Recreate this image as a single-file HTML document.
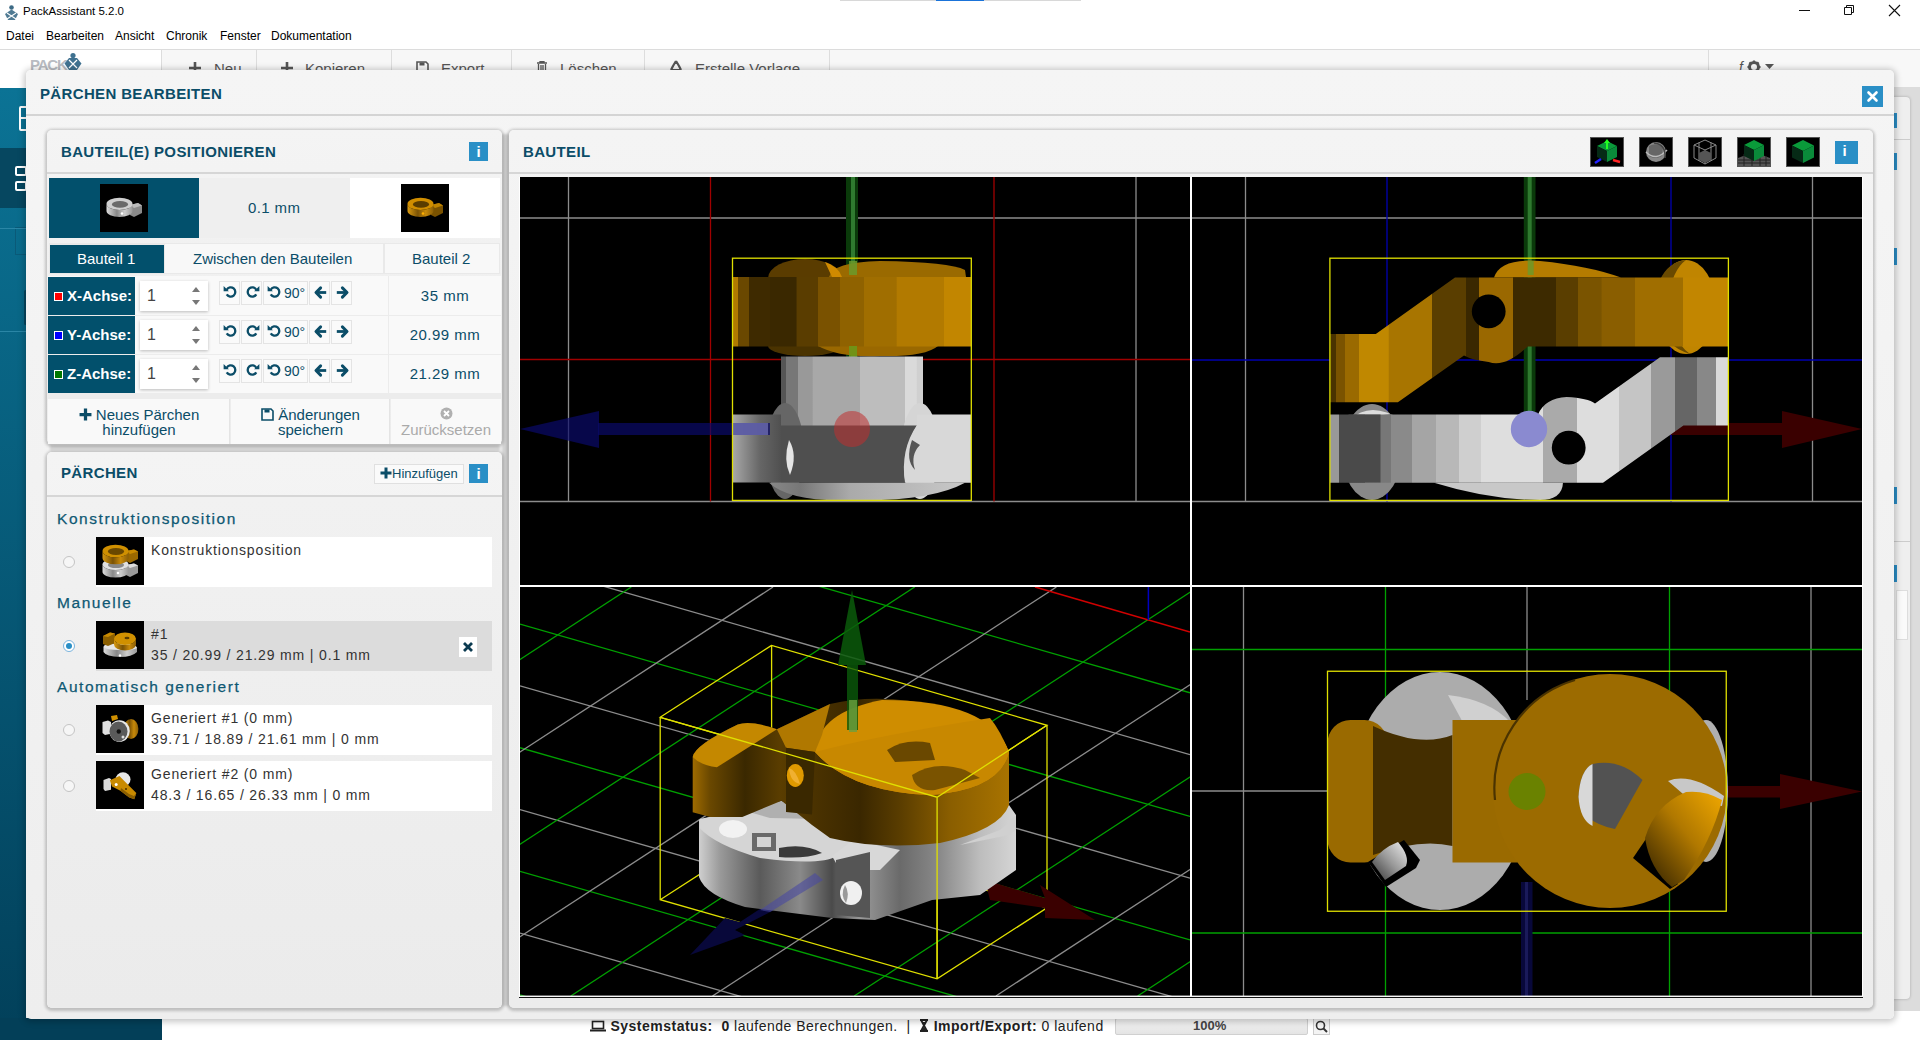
<!DOCTYPE html>
<html><head><meta charset="utf-8">
<style>
*{margin:0;padding:0;box-sizing:border-box}
html,body{width:1920px;height:1040px;overflow:hidden;background:#fff;font-family:"Liberation Sans",sans-serif;position:relative}
.a{position:absolute}
.t{position:absolute;white-space:nowrap;line-height:1}
.teal{color:#0b4d68}
.h{font-weight:bold;letter-spacing:.35px;color:#0b4d68;font-size:15px}
.card{position:absolute;background:linear-gradient(#f4f4f4,#ececec);border-radius:5px;box-shadow:0 1px 3px 2px rgba(0,0,0,.2)}
.sep{position:absolute;height:2px;background:#d6d6d6}
.btn{position:absolute;background:#fafafa;border:1px solid #e2e2e2}

.ib{width:19px;height:19px;background:#2a8fc6}
.ib:after{content:"i";position:absolute;left:0;top:1px;width:19px;text-align:center;color:#fff;font-weight:bold;font-size:15px;line-height:17px}
.axl{left:48px;width:87px;height:38px;background:#02506c;color:#fff;font-weight:bold;font-size:15px;line-height:38px;padding-left:19px;white-space:nowrap}
.axl i{position:absolute;left:6px;top:15px;width:9px;height:9px;border:1px solid #fff}
.spin{left:140px;width:68px;height:30px;background:#fff;box-shadow:0 1px 3px rgba(0,0,0,.25);font-size:16px;color:#444;line-height:30px;padding-left:7px}
.spin b,.spin u{position:absolute;left:52px;width:0;height:0;border-left:4.5px solid transparent;border-right:4.5px solid transparent;font-size:0}
.spin b{top:6px;border-bottom:5px solid #777}.spin u{top:19px;border-top:5px solid #777}
.rb{height:24px;background:#fafafa;border:1px solid #e4e4e4}
.rb svg{position:absolute;left:1px;top:0}
.rb span{position:absolute;left:20px;top:2.5px;font-size:14px;color:#0b4d68}
.val{width:112px;text-align:center;font-size:15px;letter-spacing:.5px}
.ab{text-align:center;font-size:15px;line-height:15px;white-space:nowrap}
.grp{font-size:15.5px;color:#0e5873;letter-spacing:1.55px;-webkit-text-stroke:.25px #0e5873}
.it{font-size:14px;color:#333;letter-spacing:.85px}
.rad{width:12px;height:12px;border-radius:50%;border:1px solid #c4c4c4;background:#f6f6f6}
.rad.on{border-color:#7bb4dd;background:#fff}
.rad.on:after{content:"";position:absolute;left:2px;top:2px;width:6px;height:6px;border-radius:50%;background:#2a8fc6}
.tb{top:137px;width:34px;height:30px;border:1px solid #555;background:#000}
.tb svg{display:block}
</style></head><body>
<svg width="0" height="0" style="position:absolute">
<defs>
 <linearGradient id="gW" x1="0" x2="1"><stop offset="0" stop-color="#ddd"/><stop offset=".4" stop-color="#888"/><stop offset=".7" stop-color="#ccc"/><stop offset="1" stop-color="#999"/></linearGradient>
 <linearGradient id="gO" x1="0" x2="1"><stop offset="0" stop-color="#d99a10"/><stop offset=".4" stop-color="#7a5205"/><stop offset=".7" stop-color="#c88a0a"/><stop offset="1" stop-color="#8a5e06"/></linearGradient>
 <symbol id="ccw" viewBox="0 0 19 22"><path d="M5.72 7.7 A4.6 4.6 0 1 1 5.72 12.3" fill="none" stroke="#0b4d68" stroke-width="2.3"/><path d="M2.6 4 L2.6 9.3 L7.9 9.3 Z" fill="#0b4d68"/></symbol>
 <symbol id="cw" viewBox="0 0 19 22"><path d="M13.28 7.7 A4.6 4.6 0 1 0 13.28 12.3" fill="none" stroke="#0b4d68" stroke-width="2.3"/><path d="M16.4 4 L16.4 9.3 L11.1 9.3 Z" fill="#0b4d68"/></symbol>
 <symbol id="la" viewBox="0 0 19 22"><path d="M15.2 10.5H6" stroke="#0b4d68" stroke-width="2.8"/><path d="M9.6 5.9L5 10.5L9.6 15.1" fill="none" stroke="#0b4d68" stroke-width="3" stroke-linecap="round" stroke-linejoin="round"/></symbol>
 <symbol id="ra" viewBox="0 0 19 22"><path d="M3.8 10.5H13" stroke="#0b4d68" stroke-width="2.8"/><path d="M9.4 5.9L14 10.5L9.4 15.1" fill="none" stroke="#0b4d68" stroke-width="3" stroke-linecap="round" stroke-linejoin="round"/></symbol>
 <symbol id="thumbW" viewBox="0 0 48 48"><rect width="48" height="48" fill="#000"/><path d="M30 21 L38 19 L42 21.5 V29 L34 33 L30 31Z" fill="#8a8a8a"/><path d="M30 21 L38 19 L42 21.5 L34 24Z" fill="#bbb"/><path d="M6.5 19.9 A13 6.1 0 0 0 32.5 19.9 V26.9 A13 6.1 0 0 1 6.5 26.9Z" fill="url(#gW)"/><ellipse cx="19.5" cy="19.9" rx="13" ry="6.1" fill="#cfcfcf"/><ellipse cx="20.0" cy="20.4" rx="8.06" ry="3.35" fill="#6a6a6a"/><circle cx="22" cy="29.5" r="1.3" fill="#fff"/></symbol>
 <symbol id="thumbO" viewBox="0 0 48 48"><rect width="48" height="48" fill="#000"/><path d="M30 21 L38 19 L42 21.5 V29 L34 33 L30 31Z" fill="#7a5200"/><path d="M30 21 L38 19 L42 21.5 L34 24Z" fill="#c08400"/><path d="M6.5 19.9 A13 6.1 0 0 0 32.5 19.9 V26.9 A13 6.1 0 0 1 6.5 26.9Z" fill="url(#gO)"/><ellipse cx="19.5" cy="19.9" rx="13" ry="6.1" fill="#d08e00"/><ellipse cx="20.0" cy="20.4" rx="8.06" ry="3.35" fill="#5a3d00"/><circle cx="22" cy="29.5" r="1.3" fill="#ffb000"/></symbol>
 <symbol id="thumbK" viewBox="0 0 48 48"><rect width="48" height="48" fill="#000"/><path d="M30 28 L38 26.5 L42 28.5 V36 L34 40 L30 38Z" fill="#9a9a9a"/><path d="M30 28 L38 26.5 L42 28.5 L34 31Z" fill="#ddd"/><path d="M6.5 27.5 A13 5.5 0 0 0 32.5 27.5 V35.0 A13 5.5 0 0 1 6.5 35.0Z" fill="url(#gW)"/><ellipse cx="19.5" cy="27.5" rx="13" ry="5.5" fill="#e0e0e0"/><ellipse cx="20.0" cy="28.0" rx="8.06" ry="3.03" fill="#888"/><circle cx="22" cy="36" r="1.3" fill="#fff"/><path d="M30 14 L38 12.5 L42 14.5 V22 L34 26 L30 24Z" fill="#9a6800"/><path d="M30 14 L38 12.5 L42 14.5 L34 17Z" fill="#c88a00"/><path d="M6.5 14 A13 6.3 0 0 0 32.5 14 V21 A13 6.3 0 0 1 6.5 21Z" fill="url(#gO)"/><ellipse cx="19.5" cy="14" rx="13" ry="6.3" fill="#d09000"/><ellipse cx="20.0" cy="14.5" rx="8.06" ry="3.47" fill="#6a4800"/></symbol>
 <symbol id="thumbM" viewBox="0 0 48 48"><rect width="48" height="48" fill="#000"/><path d="M7.5 26 Q8 22 24 22.5 Q40 22 41 27 V31 Q36 36 24 36 Q10 35.5 7.5 31Z" fill="url(#gW)"/><path d="M7.5 26 Q8 22 24 22.5 Q40 22 41 27 Q38 29 24 29 Q10 29 7.5 26Z" fill="#e5e5e5"/><path d="M7 15 L14 11.5 L19 12.5 V22 L12 25 L7 23Z" fill="#8a5e00"/><path d="M7 15 L14 11.5 L19 12.5 L12 16Z" fill="#c88a00"/><path d="M18 17.75 A11 6.25 0 0 0 40 17.75 V23.5 A11 6 0 0 1 18 23.5Z" fill="url(#gO)"/><ellipse cx="29" cy="17.75" rx="11" ry="6.25" fill="#d09000"/><ellipse cx="31" cy="17" rx="2.5" ry="1.3" fill="#5a3d00"/><circle cx="24" cy="34.5" r="1.2" fill="#fff"/></symbol>
 <symbol id="thumbG1" viewBox="0 0 48 48"><rect width="48" height="48" fill="#000"/><ellipse cx="35" cy="24" rx="7.4" ry="10" fill="url(#gO)"/><path d="M15 11 L21 10 L22 14 L16 16Z" fill="#d09000"/><path d="M6.5 17 L12 15.4 L15 17 V28.7 L9 30 L6.5 28Z" fill="#e0e0e0"/><ellipse cx="23.5" cy="26" rx="10.3" ry="10.8" fill="#e8e8e8"/><ellipse cx="22.5" cy="26.5" rx="9" ry="10" fill="#5a5a5a"/><circle cx="22.8" cy="26.5" r="2.2" fill="#111"/><circle cx="27" cy="32" r="1.5" fill="#ddd"/></symbol>
 <symbol id="thumbG2" viewBox="0 0 48 48"><rect width="48" height="48" fill="#000"/><ellipse cx="27" cy="18.5" rx="7.5" ry="7.2" fill="#e8e8e8"/><path d="M7.5 19 L13 17 L15 18 V28.7 L9 30 L7.5 28Z" fill="#dcdcdc"/><path d="M13.9 19.2 L23.4 15 L30.8 22.4 L40.3 32 L38.2 38.3 L32.9 36.2 L24.4 29.8 L16 25.6Z" fill="#c88a00"/><path d="M24.4 29.8 L32.9 36.2 L38.2 38.3 L40.3 32 L38 35 L33 33 L25 27Z" fill="#8a5e00"/><circle cx="20.2" cy="23.5" r="1.5" fill="#fff"/><circle cx="30" cy="28" r="0.9" fill="#3a2800"/></symbol>
</defs></svg>


<!-- title bar -->
<svg class="a" style="left:2px;top:3px" width="18" height="18" viewBox="0 0 18 18">
 <circle cx="9.5" cy="4.5" r="2.3" fill="#3d6a85"/>
 <path d="M3 11 L9.5 6.5 L16 11 L13 17 L6 17 Z" fill="#4f7a93"/>
 <path d="M5 10 L14 16 M14 10 L5 16" stroke="#fff" stroke-width="1.1"/>
</svg>
<div class="t" style="left:23px;top:6px;font-size:11.5px;color:#000">PackAssistant 5.2.0</div>
<div class="a" style="left:840px;top:0;width:241px;height:1px;background:#d8d8d8"></div>
<div class="a" style="left:936px;top:0;width:48px;height:1px;background:#1a73d9"></div>
<!-- window controls -->
<div class="a" style="left:1799px;top:10px;width:11px;height:1px;background:#111"></div>
<svg class="a" style="left:1843px;top:4px" width="12" height="12" viewBox="0 0 12 12"><path d="M1.5 3.5h7v7h-7z M3.5 3.5v-2h7v7h-2" fill="none" stroke="#111" stroke-width="1"/></svg>
<svg class="a" style="left:1888px;top:4px" width="13" height="13" viewBox="0 0 13 13"><path d="M1 1L12 12M12 1L1 12" stroke="#111" stroke-width="1.1"/></svg>

<!-- menu -->
<div class="t" style="left:6px;top:30px;font-size:12px;color:#000">Datei</div>
<div class="t" style="left:46px;top:30px;font-size:12px;color:#000">Bearbeiten</div>
<div class="t" style="left:115px;top:30px;font-size:12px;color:#000">Ansicht</div>
<div class="t" style="left:166px;top:30px;font-size:12px;color:#000">Chronik</div>
<div class="t" style="left:220px;top:30px;font-size:12px;color:#000">Fenster</div>
<div class="t" style="left:271px;top:30px;font-size:12px;color:#000">Dokumentation</div>
<div class="a" style="left:0;top:49px;width:1920px;height:1px;background:#dcdcdc"></div>

<!-- background toolbar -->
<div class="a" style="left:161px;top:50px;width:1547px;height:40px;background:#f7f7f7"></div>
<div class="a" style="left:161px;top:50px;width:1px;height:30px;background:#ddd"></div>
<div class="a" style="left:256px;top:50px;width:1px;height:30px;background:#ddd"></div>
<div class="a" style="left:391px;top:50px;width:1px;height:30px;background:#ddd"></div>
<div class="a" style="left:511px;top:50px;width:1px;height:30px;background:#ddd"></div>
<div class="a" style="left:644px;top:50px;width:1px;height:30px;background:#ddd"></div>
<div class="a" style="left:829px;top:50px;width:1px;height:30px;background:#ddd"></div>
<div class="a" style="left:1708px;top:50px;width:1px;height:30px;background:#ddd"></div>
<div class="t" style="left:30px;top:57px;font-size:15px;font-weight:bold;color:#b9bcc2;letter-spacing:-1.2px">PACK</div>
<svg class="a" style="left:63px;top:52px" width="20" height="19" viewBox="0 0 20 19"><circle cx="10" cy="3.5" r="2.6" fill="#3f7190"/><path d="M1.5 11.5 L6 6 L14 6 L18.5 11.5 L14 18 L6 18Z" fill="#3f7190"/><path d="M6 8L14 16M14 8L6 16" stroke="#fff" stroke-width="1.2"/></svg>
<svg class="a" style="left:188px;top:62px" width="14" height="10" viewBox="0 0 14 10"><path d="M7 0V10M1 6H13" stroke="#555" stroke-width="2.6"/></svg><div class="t" style="left:214px;top:61px;font-size:15px;color:#555">Neu</div>
<svg class="a" style="left:280px;top:62px" width="14" height="10" viewBox="0 0 14 10"><path d="M7 0V10M1 6H13" stroke="#555" stroke-width="2.6"/></svg><div class="t" style="left:305px;top:61px;font-size:15px;color:#555">Kopieren</div>
<svg class="a" style="left:416px;top:61px" width="13" height="10" viewBox="0 0 13 10"><path d="M1 1H10L12 3V10H1Z" fill="none" stroke="#555" stroke-width="1.6"/><rect x="3.5" y="1.5" width="5" height="3" fill="#555"/></svg><div class="t" style="left:441px;top:61px;font-size:15px;color:#555">Export</div>
<svg class="a" style="left:536px;top:61px" width="12" height="10" viewBox="0 0 12 10"><path d="M1 2H11M4 2V0.5H8V2M2.5 3V10H9.5V3M5 4V10M7 4V10" stroke="#555" stroke-width="1.3" fill="none"/></svg><div class="t" style="left:560px;top:61px;font-size:15px;color:#555">Löschen</div>
<svg class="a" style="left:669px;top:60px" width="14" height="12" viewBox="0 0 14 12"><path d="M7 1L4 6M7 1L10 6M2 10H12M4 6L2 10M10 6L12 10" stroke="#555" stroke-width="2.2" fill="none"/></svg><div class="t" style="left:695px;top:61px;font-size:15px;color:#555">Erstelle Vorlage</div>
<div class="a" style="left:1709px;top:50px;width:211px;height:40px;background:#f8f8f8"></div><div class="t" style="left:1739px;top:60px;font-size:14px;color:#555;font-style:italic">f</div><svg class="a" style="left:1747px;top:60px" width="14" height="12" viewBox="0 0 14 12"><circle cx="7" cy="7" r="4.5" fill="none" stroke="#555" stroke-width="3"/><path d="M7 0.5V3M7 11V13.5M0.5 7H3M11 7H13.5M2.4 2.4L4 4M10 10L11.6 11.6M11.6 2.4L10 4M4 10L2.4 11.6" stroke="#555" stroke-width="2.2"/></svg><svg class="a" style="left:1765px;top:64px" width="9" height="6" viewBox="0 0 9 6"><path d="M0 0H9L4.5 5Z" fill="#555"/></svg>

<!-- left teal sidebar -->
<div class="a" style="left:0;top:88px;width:26px;height:952px;background:linear-gradient(#0b7395,#02405a)"></div>
<div class="a" style="left:0;top:148px;width:26px;height:60px;background:#064760"></div><div class="a" style="left:19px;top:106px;width:10px;height:25px;border:2px solid #fff;border-radius:2px"></div><div class="a" style="left:19px;top:117px;width:8px;height:2px;background:#fff"></div><div class="a" style="left:15px;top:166px;width:12px;height:10px;border:2px solid #fff;border-radius:2px"></div><div class="a" style="left:15px;top:181px;width:12px;height:10px;border:2px solid #fff;border-radius:2px"></div><div class="a" style="left:15px;top:227px;width:12px;height:28px;border:1px solid #0a5a78"></div><div class="a" style="left:0;top:228px;width:26px;height:1px;background:#2a86a6"></div><div class="a" style="left:0;top:331px;width:26px;height:1px;background:#2a86a6"></div><div class="a" style="left:24px;top:290px;width:3px;height:35px;background:#064760;border-radius:2px"></div>
<div class="a" style="left:0;top:1018px;width:162px;height:22px;background:#033f58"></div>

<!-- background right panel -->
<div class="a" style="left:1860px;top:87px;width:60px;height:924px;background:#dcdcdc"></div><div class="a" style="left:1880px;top:97px;width:30px;height:902px;background:#efefef;box-shadow:0 0 3px rgba(0,0,0,.25);border-radius:4px"></div><div class="a" style="left:1880px;top:139px;width:30px;height:1px;background:#ccc"></div><div class="a" style="left:1880px;top:541px;width:30px;height:1px;background:#ccc"></div><div class="a" style="left:1896px;top:590px;width:12px;height:50px;background:#fafafa;border:1px solid #ddd"></div>
<div class="a" style="left:1893px;top:113px;width:4px;height:15px;background:#2a8cc4"></div>
<div class="a" style="left:1893px;top:153px;width:4px;height:17px;background:#2a8cc4"></div>
<div class="a" style="left:1893px;top:248px;width:4px;height:17px;background:#2a8cc4"></div>
<div class="a" style="left:1893px;top:487px;width:4px;height:17px;background:#2a8cc4"></div>
<div class="a" style="left:1893px;top:565px;width:4px;height:17px;background:#2a8cc4"></div>

<!-- status bar -->
<div class="t" style="left:590px;top:1019px;font-size:14px;color:#222;letter-spacing:.5px"><svg width="16" height="12" viewBox="0 0 16 12" style="vertical-align:-1px"><rect x="2.5" y="1.5" width="11" height="7" fill="none" stroke="#222" stroke-width="1.6"/><path d="M0 10.5H16" stroke="#222" stroke-width="2"/></svg> <b>Systemstatus:</b>&nbsp; <b>0</b> laufende Berechnungen. &nbsp;|&nbsp; <svg width="10" height="13" viewBox="0 0 10 13" style="vertical-align:-1px"><path d="M1 1H9M1 12H9M2 1L8 12M8 1L2 12" stroke="#222" stroke-width="1.8" fill="none"/><path d="M3 3H7L5 6Z M5 8L2.5 11.5H7.5Z" fill="#222"/></svg> <b>Import/Export:</b> 0 laufend</div>
<div class="a" style="left:1115px;top:1018px;width:193px;height:17px;background:linear-gradient(#f4f4f4,#e4e4e4);border:1px solid #d0d0d0;border-radius:2px"></div>
<div class="t" style="left:1193px;top:1019px;font-size:13px;font-weight:bold;color:#444">100%</div>
<div class="a" style="left:1313px;top:1018px;width:17px;height:17px;border:1px solid #ccc;background:#f4f4f4"></div><svg class="a" style="left:1314px;top:1019px" width="15" height="15" viewBox="0 0 15 15"><circle cx="6.5" cy="6.5" r="4" fill="none" stroke="#333" stroke-width="1.6"/><path d="M9.5 9.5L13 13" stroke="#333" stroke-width="2"/></svg>

<!-- DIALOG -->
<div class="a" id="dlg" style="left:26px;top:70px;width:1868px;height:949px;background:linear-gradient(#f5f5f5,#eeeeee);border-radius:5px;box-shadow:0 1px 6px 2px rgba(0,0,0,.22)">
</div>
<div class="t h" style="left:40px;top:86px;font-size:15px">PÄRCHEN BEARBEITEN</div>
<div class="a" style="left:1862px;top:86px;width:21px;height:21px;background:#2a8fc6"></div>
<svg class="a" style="left:1862px;top:86px" width="21" height="21" viewBox="0 0 21 21"><path d="M6.5 6.5L14.5 14.5M14.5 6.5L6.5 14.5" stroke="#fff" stroke-width="2.6" stroke-linecap="round"/></svg>
<div class="sep" style="left:26px;top:114px;width:1868px;height:2px;background:#d4d4d4"></div>

<div class="a" style="left:502px;top:134px;width:7px;height:872px;background:#d2d2d2;filter:blur(1px)"></div><div class="a" style="left:50px;top:445px;width:450px;height:6px;background:#d8d8d8;filter:blur(1px)"></div>
<!-- LEFT CARD -->
<!-- PÄRCHEN CARD -->
<div class="card" style="left:47px;top:452px;width:455px;height:556px"></div>
<div class="t h" style="left:61px;top:465px">PÄRCHEN</div>

<div class="card" style="left:47px;top:130px;width:455px;height:314px"></div>
<div class="t h" style="left:61px;top:144px">BAUTEIL(E) POSITIONIEREN</div>
<!-- info btn -->
<div class="a ib" style="left:469px;top:142px"></div>
<div class="sep" style="left:47px;top:172px;width:455px"></div>
<!-- part select row -->
<div class="a" style="left:49px;top:178px;width:150px;height:60px;background:#02506c"></div>
<div class="a" style="left:199px;top:178px;width:151px;height:60px;background:#efefef"></div>
<div class="a" style="left:350px;top:178px;width:150px;height:60px;background:#fff"></div>
<svg class="a" style="left:100px;top:184px" width="48" height="48" viewBox="0 0 48 48"><use href="#thumbW"/></svg>
<svg class="a" style="left:401px;top:184px" width="48" height="48" viewBox="0 0 48 48"><use href="#thumbO"/></svg>
<div class="t teal" style="left:248px;top:200px;font-size:15px;letter-spacing:.4px">0.1 mm</div>
<!-- tabs -->
<div class="a" style="left:49px;top:243px;width:451px;height:31px;background:#e9e9e9"></div>
<div class="a" style="left:50px;top:245px;width:114px;height:28px;background:#02506c"></div>
<div class="a" style="left:165px;top:244px;width:218px;height:29px;background:#f8f8f8"></div>
<div class="a" style="left:385px;top:244px;width:114px;height:29px;background:#f8f8f8"></div>
<div class="t" style="left:77px;top:251px;font-size:15px;color:#fff">Bauteil 1</div>
<div class="t teal" style="left:193px;top:251px;font-size:15px">Zwischen den Bauteilen</div>
<div class="t teal" style="left:412px;top:251px;font-size:15px">Bauteil 2</div>
<!-- axis rows -->
<div class="a" style="left:48px;top:276px;width:453px;height:117px;background:#f9f9f9"></div>
<div class="a" style="left:48px;top:315px;width:453px;height:1px;background:#ececec"></div>
<div class="a" style="left:48px;top:354px;width:453px;height:1px;background:#ececec"></div>
<div class="a" style="left:388px;top:276px;width:1px;height:117px;background:#ececec"></div>
<div class="a axl" style="top:277px"><i style="background:#f00"></i>X-Achse:</div>
<div class="a axl" style="top:316px"><i style="background:#00f"></i>Y-Achse:</div>
<div class="a axl" style="top:355px"><i style="background:#070"></i>Z-Achse:</div>
<div class="a spin" style="top:281px">1<b></b><u></u></div>
<div class="a spin" style="top:320px">1<b></b><u></u></div>
<div class="a spin" style="top:359px">1<b></b><u></u></div>
<div class="a rb" style="left:219px;top:281px;width:21px"><svg width="19" height="22" viewBox="0 0 19 22"><use href="#ccw"/></svg></div>
<div class="a rb" style="left:241px;top:281px;width:21px"><svg width="19" height="22" viewBox="0 0 19 22"><use href="#cw"/></svg></div>
<div class="a rb" style="left:263px;top:281px;width:45px"><svg width="19" height="22" viewBox="0 0 19 22"><use href="#ccw"/></svg><span>90°</span></div>
<div class="a rb" style="left:309px;top:281px;width:21px"><svg width="19" height="22" viewBox="0 0 19 22"><use href="#la"/></svg></div>
<div class="a rb" style="left:331px;top:281px;width:21px"><svg width="19" height="22" viewBox="0 0 19 22"><use href="#ra"/></svg></div>
<div class="a rb" style="left:219px;top:320px;width:21px"><svg width="19" height="22" viewBox="0 0 19 22"><use href="#ccw"/></svg></div>
<div class="a rb" style="left:241px;top:320px;width:21px"><svg width="19" height="22" viewBox="0 0 19 22"><use href="#cw"/></svg></div>
<div class="a rb" style="left:263px;top:320px;width:45px"><svg width="19" height="22" viewBox="0 0 19 22"><use href="#ccw"/></svg><span>90°</span></div>
<div class="a rb" style="left:309px;top:320px;width:21px"><svg width="19" height="22" viewBox="0 0 19 22"><use href="#la"/></svg></div>
<div class="a rb" style="left:331px;top:320px;width:21px"><svg width="19" height="22" viewBox="0 0 19 22"><use href="#ra"/></svg></div>
<div class="a rb" style="left:219px;top:359px;width:21px"><svg width="19" height="22" viewBox="0 0 19 22"><use href="#ccw"/></svg></div>
<div class="a rb" style="left:241px;top:359px;width:21px"><svg width="19" height="22" viewBox="0 0 19 22"><use href="#cw"/></svg></div>
<div class="a rb" style="left:263px;top:359px;width:45px"><svg width="19" height="22" viewBox="0 0 19 22"><use href="#ccw"/></svg><span>90°</span></div>
<div class="a rb" style="left:309px;top:359px;width:21px"><svg width="19" height="22" viewBox="0 0 19 22"><use href="#la"/></svg></div>
<div class="a rb" style="left:331px;top:359px;width:21px"><svg width="19" height="22" viewBox="0 0 19 22"><use href="#ra"/></svg></div>

<div class="t teal val" style="left:389px;top:288px">35 mm</div>
<div class="t teal val" style="left:389px;top:327px">20.99 mm</div>
<div class="t teal val" style="left:389px;top:366px">21.29 mm</div>
<!-- action buttons -->
<div class="a" style="left:48px;top:393px;width:453px;height:6px;background:#ececec"></div>
<div class="a" style="left:48px;top:399px;width:182px;height:45px;background:#f9f9f9;border-right:1px solid #e4e4e4"></div>
<div class="a" style="left:231px;top:399px;width:159px;height:45px;background:#f9f9f9;border-right:1px solid #e4e4e4"></div>
<div class="a" style="left:391px;top:399px;width:110px;height:45px;background:#f9f9f9"></div>
<div class="t teal ab" style="left:48px;top:407px;width:182px"><svg width="13" height="13" viewBox="0 0 12 12" style="vertical-align:-1px"><path d="M6 0.5V11.5M0.5 6H11.5" stroke="#0b4d68" stroke-width="3"/></svg> Neues Pärchen<br>hinzufügen</div>
<div class="t teal ab" style="left:231px;top:407px;width:159px"><svg width="13" height="13" viewBox="0 0 13 13" style="vertical-align:-1px"><path d="M1 1h9l2 2v9H1z" fill="none" stroke="#0b4d68" stroke-width="1.6"/><rect x="3.5" y="1.5" width="5" height="3" fill="#0b4d68"/></svg> Änderungen<br>speichern</div>
<div class="t ab" style="left:391px;top:407px;width:110px;color:#aaa"><svg width="13" height="13" viewBox="0 0 13 13"><circle cx="6.5" cy="6.5" r="6" fill="#b0b0b0"/><path d="M4 4L9 9M9 4L4 9" stroke="#fff" stroke-width="1.8"/></svg><br>Zurücksetzen</div>
<!-- PAERCHEN card contents -->
<div class="a" style="left:374px;top:464px;width:90px;height:20px;background:#fafafa;border:1px solid #e0e0e0"></div>
<div class="t teal" style="left:380px;top:467px;font-size:13px;color:#0b4d68"><svg width="12" height="12" viewBox="0 0 12 12" style="vertical-align:-1px"><path d="M6 0.5V11.5M0.5 6H11.5" stroke="#0b4d68" stroke-width="3"/></svg>Hinzufügen</div>
<div class="a ib" style="left:469px;top:464px"></div>
<div class="sep" style="left:47px;top:495px;width:455px"></div>
<div class="a" style="left:48px;top:497px;width:453px;height:510px;background:linear-gradient(#f1f1f1,#ebebeb)"></div>
<div class="t grp" style="left:57px;top:511px">Konstruktionsposition</div>
<div class="t grp" style="left:57px;top:595px">Manuelle</div>
<div class="t grp" style="left:57px;top:679px">Automatisch generiert</div>
<!-- items -->
<div class="a" style="left:96px;top:537px;width:396px;height:50px;background:#fff"></div>
<div class="a" style="left:96px;top:621px;width:396px;height:50px;background:#dcdcdc"></div>
<div class="a" style="left:96px;top:705px;width:396px;height:50px;background:#fff"></div>
<div class="a" style="left:96px;top:761px;width:396px;height:50px;background:#fff"></div>
<svg class="a" style="left:96px;top:537px" width="48" height="48" viewBox="0 0 48 48"><use href="#thumbK"/></svg>
<svg class="a" style="left:96px;top:621px" width="48" height="48" viewBox="0 0 48 48"><use href="#thumbM"/></svg>
<svg class="a" style="left:96px;top:705px" width="48" height="48" viewBox="0 0 48 48"><use href="#thumbG1"/></svg>
<svg class="a" style="left:96px;top:761px" width="48" height="48" viewBox="0 0 48 48"><use href="#thumbG2"/></svg>
<div class="a rad" style="left:63px;top:556px"></div>
<div class="a rad on" style="left:63px;top:640px"></div>
<div class="a rad" style="left:63px;top:724px"></div>
<div class="a rad" style="left:63px;top:780px"></div>
<div class="t it" style="left:151px;top:543px">Konstruktionsposition</div>
<div class="t it" style="left:151px;top:627px">#1</div>
<div class="t it" style="left:151px;top:648px">35 / 20.99 / 21.29 mm | 0.1 mm</div>
<div class="t it" style="left:151px;top:711px">Generiert #1 (0 mm)</div>
<div class="t it" style="left:151px;top:732px">39.71 / 18.89 / 21.61 mm | 0 mm</div>
<div class="t it" style="left:151px;top:767px">Generiert #2 (0 mm)</div>
<div class="t it" style="left:151px;top:788px">48.3 / 16.65 / 26.33 mm | 0 mm</div>
<div class="a" style="left:459px;top:637px;width:18px;height:20px;background:#fff"></div>
<svg class="a" style="left:459px;top:637px" width="18" height="20" viewBox="0 0 18 20"><path d="M5 6L13 14M13 6L5 14" stroke="#0b3a50" stroke-width="2.8"/></svg>



<!-- RIGHT CARD -->
<div class="card" style="left:509px;top:130px;width:1364px;height:878px"></div>
<div class="t h" style="left:523px;top:144px">BAUTEIL</div><div class="sep" style="left:509px;top:172px;width:1364px"></div>
<div class="a tb" style="left:1590px"><svg width="32" height="28" viewBox="0 0 32 28"><rect width="32" height="28" fill="#000"/><path d="M16 3 L26 8.0 L16 13 L6 8.0Z" fill="#0a9a3a"/><path d="M6 8.0 L16 13 V24.0 L6 19.0Z" fill="#062a16"/><path d="M26 8.0 L16 13 V24.0 L26 19.0Z" fill="#0a8a3a"/><path d="M16 11V3" stroke="#2f2" stroke-width="2"/><path d="M13 5L16 1L19 5Z" fill="#2f2"/><path d="M22 22L29 24" stroke="#f22" stroke-width="2.4"/><path d="M10 21L4 25" stroke="#22f" stroke-width="2.4"/></svg></div>
<div class="a tb" style="left:1639px"><svg width="32" height="28" viewBox="0 0 32 28"><rect width="32" height="28" fill="#000"/><circle cx="16" cy="14" r="10" fill="#888"/><path d="M9 8 Q16 4 23 9 L22 18 Q15 22 9 18Z" fill="#666"/><path d="M6 14 Q16 24 27 12" stroke="#bbb" stroke-width="1.5" fill="none"/><path d="M14 5 Q26 6 25 20" stroke="#444" stroke-width="1.5" fill="none"/></svg></div>
<div class="a tb" style="left:1688px"><svg width="32" height="28" viewBox="0 0 32 28"><rect width="32" height="28" fill="#000"/><path d="M16 2L27 7V20L16 26L5 20V7Z M5 7L16 12L27 7 M16 12V26 M10 4.5V23 M22 4.5V23" stroke="#888" stroke-width="1" fill="none"/><path d="M16 12L22 15V22L16 25L10 22V15Z" fill="#555"/></svg></div>
<div class="a tb" style="left:1737px"><svg width="32" height="28" viewBox="0 0 32 28"><rect width="32" height="28" fill="#000"/><path d="M0 20L16 14L32 20V28H0Z" fill="#555"/><path d="M0 22H32M0 25H32M6 16V28M14 14V28M22 16V28M28 18V28" stroke="#222" stroke-width="1"/><path d="M16 2 L26 7.0 L16 12 L6 7.0Z" fill="#0a9a3a"/><path d="M6 7.0 L16 12 V23.0 L6 18.0Z" fill="#062a16"/><path d="M26 7.0 L16 12 V23.0 L26 18.0Z" fill="#0a8a3a"/></svg></div>
<div class="a tb" style="left:1786px"><svg width="32" height="28" viewBox="0 0 32 28"><rect width="32" height="28" fill="#000"/><path d="M16 2 L27 7.5 L16 13 L5 7.5Z" fill="#0a9a3a"/><path d="M5 7.5 L16 13 V25.1 L5 19.6Z" fill="#062a16"/><path d="M27 7.5 L16 13 V25.1 L27 19.6Z" fill="#0a8a3a"/></svg></div>
<div class="a ib" style="left:1835px;top:141px;width:23px;height:23px"></div>

<!--VP--><svg class="a" style="left:0;top:0" width="1920" height="1040" viewBox="0 0 1920 1040"><defs><linearGradient id="v1o" gradientUnits="userSpaceOnUse" x1="732.5" y1="0" x2="971" y2="0"><stop offset="0.0000" stop-color="#b07a00"/><stop offset="0.0220" stop-color="#b07a00"/><stop offset="0.0221" stop-color="#6a4800"/><stop offset="0.0671" stop-color="#6a4800"/><stop offset="0.0671" stop-color="#3e2a00"/><stop offset="0.1572" stop-color="#3e2a00"/><stop offset="0.1573" stop-color="#3a2800"/><stop offset="0.2683" stop-color="#3a2800"/><stop offset="0.2684" stop-color="#5a3d00"/><stop offset="0.3585" stop-color="#5a3d00"/><stop offset="0.3585" stop-color="#7a5200"/><stop offset="0.4507" stop-color="#7a5200"/><stop offset="0.4508" stop-color="#8f6200"/><stop offset="0.5493" stop-color="#8f6200"/><stop offset="0.5493" stop-color="#a06e00"/><stop offset="0.6876" stop-color="#a06e00"/><stop offset="0.6877" stop-color="#b27a00"/><stop offset="0.8868" stop-color="#b27a00"/><stop offset="0.8868" stop-color="#c28600"/><stop offset="1.0000" stop-color="#c28600"/></linearGradient><linearGradient id="v1c" gradientUnits="userSpaceOnUse" x1="781" y1="0" x2="923" y2="0"><stop offset="0.0000" stop-color="#555"/><stop offset="0.0317" stop-color="#555"/><stop offset="0.0318" stop-color="#777"/><stop offset="0.1162" stop-color="#777"/><stop offset="0.1163" stop-color="#999"/><stop offset="0.2218" stop-color="#999"/><stop offset="0.2219" stop-color="#a8a8a8"/><stop offset="0.5563" stop-color="#a8a8a8"/><stop offset="0.5564" stop-color="#bdbdbd"/><stop offset="0.8732" stop-color="#bdbdbd"/><stop offset="0.8733" stop-color="#dadada"/><stop offset="0.9542" stop-color="#dadada"/><stop offset="0.9543" stop-color="#d0d0d0"/><stop offset="1.0000" stop-color="#d0d0d0"/></linearGradient><linearGradient id="v1l" gradientUnits="userSpaceOnUse" x1="732" y1="0" x2="781" y2="0"><stop offset="0.0000" stop-color="#aaa"/><stop offset="0.2653" stop-color="#8a8a8a"/><stop offset="0.5714" stop-color="#666"/><stop offset="1.0000" stop-color="#505050"/></linearGradient><linearGradient id="v1b" gradientUnits="userSpaceOnUse" x1="769" y1="0" x2="965" y2="0"><stop offset="0.0000" stop-color="#888"/><stop offset="0.1582" stop-color="#777"/><stop offset="0.4133" stop-color="#aaa"/><stop offset="1.0000" stop-color="#c8c8c8"/></linearGradient><linearGradient id="v2o" gradientUnits="userSpaceOnUse" x1="1330.4" y1="0" x2="1728" y2="0"><stop offset="0.0000" stop-color="#4a3300"/><stop offset="0.0131" stop-color="#4a3300"/><stop offset="0.0131" stop-color="#7a5300"/><stop offset="0.0360" stop-color="#7a5300"/><stop offset="0.0360" stop-color="#9a6a00"/><stop offset="0.0714" stop-color="#9a6a00"/><stop offset="0.0715" stop-color="#c08800"/><stop offset="0.1461" stop-color="#c08800"/><stop offset="0.1462" stop-color="#a87500"/><stop offset="0.2543" stop-color="#a87500"/><stop offset="0.2543" stop-color="#5a3e00"/><stop offset="0.3398" stop-color="#5a3e00"/><stop offset="0.3398" stop-color="#3a2800"/><stop offset="0.3725" stop-color="#3a2800"/><stop offset="0.3725" stop-color="#9a6800"/><stop offset="0.4190" stop-color="#9a6800"/><stop offset="0.4190" stop-color="#9a6800"/><stop offset="0.4598" stop-color="#9a6800"/><stop offset="0.4598" stop-color="#3d2a00"/><stop offset="0.5013" stop-color="#3d2a00"/><stop offset="0.5013" stop-color="#3d2a00"/><stop offset="0.5674" stop-color="#3d2a00"/><stop offset="0.5674" stop-color="#5a3e00"/><stop offset="0.6227" stop-color="#5a3e00"/><stop offset="0.6228" stop-color="#7a5400"/><stop offset="0.6818" stop-color="#7a5400"/><stop offset="0.6819" stop-color="#8a5e00"/><stop offset="0.7661" stop-color="#8a5e00"/><stop offset="0.7661" stop-color="#a06e00"/><stop offset="0.8856" stop-color="#a06e00"/><stop offset="0.8856" stop-color="#c28600"/><stop offset="0.9748" stop-color="#c28600"/><stop offset="0.9749" stop-color="#c28600"/><stop offset="1.0000" stop-color="#c28600"/></linearGradient><linearGradient id="v2w" gradientUnits="userSpaceOnUse" x1="1330" y1="0" x2="1728" y2="0"><stop offset="0.0000" stop-color="#999"/><stop offset="0.0232" stop-color="#999"/><stop offset="0.0233" stop-color="#4a4a4a"/><stop offset="0.0873" stop-color="#4a4a4a"/><stop offset="0.0873" stop-color="#777"/><stop offset="0.1526" stop-color="#777"/><stop offset="0.1527" stop-color="#8a8a8a"/><stop offset="0.2067" stop-color="#8a8a8a"/><stop offset="0.2067" stop-color="#a5a5a5"/><stop offset="0.2651" stop-color="#a5a5a5"/><stop offset="0.2651" stop-color="#b8b8b8"/><stop offset="0.3236" stop-color="#b8b8b8"/><stop offset="0.3236" stop-color="#cfcfcf"/><stop offset="0.3789" stop-color="#cfcfcf"/><stop offset="0.3789" stop-color="#dedede"/><stop offset="0.4698" stop-color="#dedede"/><stop offset="0.4699" stop-color="#dedede"/><stop offset="0.5356" stop-color="#dedede"/><stop offset="0.5356" stop-color="#aaa"/><stop offset="0.5783" stop-color="#aaa"/><stop offset="0.5783" stop-color="#aaa"/><stop offset="0.6210" stop-color="#aaa"/><stop offset="0.6210" stop-color="#ddd"/><stop offset="0.6436" stop-color="#ddd"/><stop offset="0.6436" stop-color="#ddd"/><stop offset="0.7249" stop-color="#ddd"/><stop offset="0.7249" stop-color="#c5c5c5"/><stop offset="0.8065" stop-color="#c5c5c5"/><stop offset="0.8066" stop-color="#9a9a9a"/><stop offset="0.8656" stop-color="#9a9a9a"/><stop offset="0.8656" stop-color="#666"/><stop offset="0.9209" stop-color="#666"/><stop offset="0.9209" stop-color="#888"/><stop offset="0.9698" stop-color="#888"/><stop offset="0.9699" stop-color="#dadada"/><stop offset="1.0000" stop-color="#dadada"/></linearGradient><linearGradient id="v2bulb" gradientUnits="userSpaceOnUse" x1="1342" y1="0" x2="1402" y2="0"><stop offset="0.0000" stop-color="#888"/><stop offset="0.3000" stop-color="#5a5a5a"/><stop offset="0.8000" stop-color="#6a6a6a"/><stop offset="1.0000" stop-color="#999"/></linearGradient><linearGradient id="v4od" x1="1" y1="0" x2="0" y2="1"><stop offset="0" stop-color="#f0a800"/><stop offset=".45" stop-color="#b07800"/><stop offset="1" stop-color="#2a1c00"/></linearGradient><linearGradient id="v4wd" x1="1" y1="0" x2="0" y2="1"><stop offset="0" stop-color="#eee"/><stop offset=".5" stop-color="#999"/><stop offset="1" stop-color="#333"/></linearGradient><linearGradient id="v3os" gradientUnits="userSpaceOnUse" x1="692" y1="0" x2="1009" y2="0"><stop offset="0.0000" stop-color="#a06c00"/><stop offset="0.0568" stop-color="#6a4800"/><stop offset="0.1672" stop-color="#3a2800"/><stop offset="0.2776" stop-color="#5a3d00"/><stop offset="0.3880" stop-color="#4a3200"/><stop offset="0.5300" stop-color="#3a2700"/><stop offset="0.6562" stop-color="#5a3d00"/><stop offset="0.8139" stop-color="#8a5e00"/><stop offset="1.0000" stop-color="#a87300"/></linearGradient><linearGradient id="v3ws" gradientUnits="userSpaceOnUse" x1="699" y1="0" x2="1016" y2="0"><stop offset="0.0000" stop-color="#cfcfcf"/><stop offset="0.0662" stop-color="#9a9a9a"/><stop offset="0.1924" stop-color="#5a5a5a"/><stop offset="0.3186" stop-color="#8a8a8a"/><stop offset="0.4196" stop-color="#4a4a4a"/><stop offset="0.5079" stop-color="#9a9a9a"/><stop offset="0.6341" stop-color="#6a6a6a"/><stop offset="0.7603" stop-color="#8a8a8a"/><stop offset="0.8864" stop-color="#bdbdbd"/><stop offset="1.0000" stop-color="#d5d5d5"/></linearGradient>
<clipPath id="c1"><rect x="520" y="177" width="670" height="408"/></clipPath>
<clipPath id="c2"><rect x="1192" y="177" width="670" height="408"/></clipPath>
<clipPath id="c3"><rect x="520" y="587" width="670" height="409"/></clipPath>
<clipPath id="c4"><rect x="1192" y="587" width="670" height="409"/></clipPath>
</defs>
<rect x="520" y="177" width="1342" height="819" fill="#000"/>
<g clip-path="url(#c1)"><path d="M568.5 177V501.5M1136 177V501.5M520 218H1190M520 501.5H1190" stroke="#8c8c8c" stroke-width="1.3"/><path d="M710.5 177V501.5M994 177V501.5M520 359.5H1190" stroke="#a00000" stroke-width="1.3"/><rect x="846" y="177" width="12" height="290" fill="#0a3a0a"/><rect x="851" y="177" width="4" height="290" fill="#2f7a2f"/><ellipse cx="805" cy="278" rx="37" ry="19" fill="#5a3c00"/><path d="M829 277 Q832 262 880 261 Q950 262 965 270 L966 277Z" fill="#9a6a00"/><path d="M825 262 Q838 266 842 277 L832 277Z" fill="#d08a00"/><ellipse cx="805" cy="346" rx="37" ry="10" fill="#4a3300"/><path d="M818 346 Q840 358 880 356 Q925 357 938 346Z" fill="#9a6800"/><rect x="732.5" y="277" width="238.5" height="69.5" fill="url(#v1o)"/><rect x="849" y="261" width="8" height="14" fill="#6a9a2a" opacity=".85"/><rect x="849" y="346" width="8" height="11" fill="#6a9a1a" opacity=".85"/><rect x="781" y="356.5" width="142" height="70" fill="url(#v1c)"/><ellipse cx="785" cy="451" rx="19" ry="48" fill="#666"/><ellipse cx="920" cy="451" rx="19" ry="48" fill="#d5d5d5"/><rect x="732.5" y="414.5" width="48.5" height="68" fill="url(#v1l)"/><path d="M781 425.6 H917 Q902 450 905 482.7 H781Z" fill="#4f4f4f"/><path d="M917 414.5 H971 V482.7 H905 Q900 450 917 425Z" fill="#d8d8d8"/><path d="M912 440 Q905 460 915 470 Q910 455 920 445Z" fill="#555"/><path d="M789 440 Q798 455 790 475 Q783 460 789 440Z" fill="#e5e5e5"/><path d="M769 482.7 Q790 502 850 500 Q930 502 965 482.7Z" fill="url(#v1b)"/><circle cx="852" cy="429" r="18" fill="#c03030" opacity=".55"/><rect x="598" y="423" width="172" height="12" fill="#0a0a6a" opacity=".7"/><rect x="732" y="423" width="36" height="12" fill="#6a6ab0" opacity=".8"/><path d="M520 429 L599 411 V448Z" fill="#0a0a6a" opacity=".7"/><rect x="732.5" y="258.2" width="238.8" height="242.2" fill="none" stroke="#e0e000" stroke-width="1.3"/></g>
<g clip-path="url(#c2)"><path d="M1245.5 177V501.5M1812.5 177V501.5M1192 218H1862M1192 501.5H1862" stroke="#8c8c8c" stroke-width="1.3"/><path d="M1387 177V501.5M1671 177V501.5M1192 360H1862" stroke="#0000b0" stroke-width="1.3"/><rect x="1523.8" y="177" width="11.7" height="236" fill="#0a3a0a"/><rect x="1527.7" y="177" width="4" height="236" fill="#2f7a2f"/><rect x="1671" y="423" width="115" height="12" fill="#3a0000"/><path d="M1862 429 L1782 411 V448Z" fill="#3a0000"/><path d="M1494 277.6 Q1500 258 1540 261 Q1590 266 1621 277.6Z" fill="#b57c00"/><ellipse cx="1686" cy="307" rx="30" ry="47" fill="#c08500"/><path d="M1660 280 Q1668 262 1686 260 Q1672 270 1668 300 Q1670 340 1690 354 Q1662 345 1660 320Z" fill="#6a4a00"/><path d="M1330 334 H1375.8 L1455 277.6 H1728 V346.4 H1527.7 Q1505 368 1488.7 362 Q1472 360 1464 355.5 L1397.9 402.3 H1330Z" fill="url(#v2o)"/><circle cx="1488.7" cy="311.4" r="16.9" fill="#000"/><rect x="1527.7" y="261" width="6" height="14" fill="#6a9a2a" opacity=".8"/><path d="M1434 482.7 Q1490 500 1540 500 Q1562 500 1563 482.7Z" fill="#c8c8c8"/><ellipse cx="1372" cy="452" rx="30" ry="48" fill="#888"/><path d="M1350 420 Q1370 400 1402 420 L1390 414Z" fill="#ddd"/><path d="M1330 414.5 H1538 Q1545 398 1566.6 397 Q1588 398 1595 403.6 L1660 357.3 H1728 V425.6 H1683.4 L1603 482.7 H1330Z" fill="url(#v2w)"/><rect x="1348.5" y="414.5" width="32" height="68" fill="#4a4a4a"/><circle cx="1568.7" cy="447.7" r="16.9" fill="#000"/><circle cx="1529" cy="429" r="18.2" fill="#8a8ad0"/><rect x="1329.9" y="258.2" width="398.5" height="242.2" fill="none" stroke="#e0e000" stroke-width="1.3"/></g>
<g clip-path="url(#c4)"><path d="M1243.5 587V996M1527 587V700M1811 587V996M1192 791H1327" stroke="#8c8c8c" stroke-width="1.3"/><path d="M1385.5 587V996M1669.5 587V996M1192 649.5H1862M1192 933H1862" stroke="#00a000" stroke-width="1.3"/><rect x="1521" y="882" width="11.5" height="114" fill="#08083a"/><rect x="1525" y="882" width="3" height="114" fill="#1a1a5a"/><rect x="1726" y="786" width="60" height="11.5" fill="#3a0000"/><path d="M1862 791.5 L1780 774 V809Z" fill="#3a0000"/><ellipse cx="1440" cy="791" rx="89" ry="119" fill="#acacac"/><path d="M1448 695 Q1490 700 1510 722 L1467 730Z" fill="#d0d0d0"/><ellipse cx="1706" cy="791" rx="22" ry="71" fill="#b0b0b0"/><rect x="1327.5" y="720" width="60" height="142.5" rx="23" fill="#9a6a00"/><path d="M1373 726 Q1420 748 1452.5 735 V846 Q1420 838 1373 855Z" fill="#442e00"/><rect x="1452.5" y="720" width="65" height="142.5" fill="#9a6a00"/><circle cx="1610" cy="791" r="117" fill="#9c6b00"/><path d="M1575 680 A113 113 0 0 0 1495 800" stroke="#4a3300" stroke-width="2.2" fill="none"/><circle cx="1527" cy="791.5" r="18.5" fill="#6a8200"/><path d="M1592.5 764 Q1620 758 1642.5 780 L1615 829 Q1580 822 1578.5 797 Q1580 770 1592.5 764Z" fill="#525252"/><path d="M1592.5 764 Q1580 770 1578.5 797 Q1580 820 1592.5 826Z" fill="#d8d8d8"/><path d="M1668 781 Q1690 772 1724 796 L1722 806 L1690 800Z" fill="#c8c8c8"/><path d="M1633 858 L1648 836 L1678 884 L1670 889Z" fill="#000"/><path d="M1645 838 Q1655 805 1686 792 Q1705 790 1722 800 Q1712 840 1684 880 L1672 887 Q1650 870 1645 838Z" fill="url(#v4od)"/><path d="M1404 840 L1420 860 L1416 868 L1386 887 L1368 862Z" fill="#000"/><path d="M1398 842 Q1410 856 1406 866 L1385 880 L1372 862 Q1382 848 1398 842Z" fill="url(#v4wd)"/><rect x="1327.5" y="671.25" width="398.75" height="240" fill="none" stroke="#e0e000" stroke-width="1.3"/></g>
<g clip-path="url(#c3)"><path d="M520 315.1 L1190 507.4" stroke="#8c8c8c" stroke-width="1.3"/><path d="M520 376.9 L1190 569.2" stroke="#00a000" stroke-width="1.3"/><path d="M520 500.5 L1190 692.8" stroke="#00a000" stroke-width="1.3"/><path d="M520 562.3 L1190 754.6" stroke="#8c8c8c" stroke-width="1.3"/><path d="M520 624.1 L1190 816.4" stroke="#00a000" stroke-width="1.3"/><path d="M520 685.9 L1190 878.2" stroke="#8c8c8c" stroke-width="1.3"/><path d="M520 747.7 L1190 940.0" stroke="#00a000" stroke-width="1.3"/><path d="M520 809.5 L1190 1001.8" stroke="#8c8c8c" stroke-width="1.3"/><path d="M520 871.3 L1190 1063.6" stroke="#00a000" stroke-width="1.3"/><path d="M520 933.1 L1190 1125.4" stroke="#8c8c8c" stroke-width="1.3"/><path d="M520 994.9 L1190 1187.2" stroke="#00a000" stroke-width="1.3"/><path d="M520 1056.7 L1190 1249.0" stroke="#8c8c8c" stroke-width="1.3"/><path d="M520 1118.5 L1190 1310.8" stroke="#00a000" stroke-width="1.3"/><path d="M-218.9 587 L-846.2 996" stroke="#00a000" stroke-width="1.3"/><path d="M-77.2 587 L-704.5 996" stroke="#8c8c8c" stroke-width="1.3"/><path d="M64.5 587 L-562.8 996" stroke="#00a000" stroke-width="1.3"/><path d="M206.2 587 L-421.1 996" stroke="#8c8c8c" stroke-width="1.3"/><path d="M347.9 587 L-279.4 996" stroke="#00a000" stroke-width="1.3"/><path d="M489.6 587 L-137.7 996" stroke="#8c8c8c" stroke-width="1.3"/><path d="M631.3 587 L4.0 996" stroke="#00a000" stroke-width="1.3"/><path d="M773.0 587 L145.7 996" stroke="#8c8c8c" stroke-width="1.3"/><path d="M914.7 587 L287.4 996" stroke="#00a000" stroke-width="1.3"/><path d="M1056.4 587 L429.1 996" stroke="#8c8c8c" stroke-width="1.3"/><path d="M1198.1 587 L570.8 996" stroke="#00a000" stroke-width="1.3"/><path d="M1339.8 587 L712.5 996" stroke="#8c8c8c" stroke-width="1.3"/><path d="M1481.5 587 L854.2 996" stroke="#00a000" stroke-width="1.3"/><path d="M1623.2 587 L995.9 996" stroke="#8c8c8c" stroke-width="1.3"/><path d="M1764.9 587 L1137.6 996" stroke="#00a000" stroke-width="1.3"/><path d="M1906.6 587 L1279.3 996" stroke="#8c8c8c" stroke-width="1.3"/><path d="M1035 587 L1190 632" stroke="#d00000" stroke-width="1.6"/><path d="M1148.4 587 V620" stroke="#0000c0" stroke-width="1.5"/><path d="M771.6 645.4 L660.2 717.3 L937.1 797.2 L1047 725.3 Z M771.6 645.4 V828 L660.2 899.7 M771.6 828 L1047 907.8 M660.2 717.3 V899.7 L937.1 978.9 L1047 907.8 V725.3 M937.1 797.2 V978.9" stroke="#e0e000" stroke-width="1.3" fill="none"/><path d="M985 880 L1045 898 L1040 885 L1095 920 L1045 918 L1045 908 L990 900Z" fill="#3a0000"/><path d="M815 873 L740 922 L725 918 L690 955 L745 935 L735 930 L823 885Z" fill="#08083a"/><path d="M699 820 L745 808 L815 825 L870 842 L1009 805 L1016 815 V870 L980 895 L932 900 L875 920 L832 918 L745 907 Q705 895 699 877Z" fill="url(#v3ws)"/><path d="M742 810 L781.5 800.7 L818 819 L800 835 L760 830Z" fill="#b0b0b0"/><path d="M699.6 819 L742 810 L770 818 L818 819 L853 840 L836.9 856 Q820 866 760 858 Q715 845 699.6 828Z" fill="#d5d5d5"/><ellipse cx="733" cy="829" rx="14" ry="9" fill="#f2f2f2"/><path d="M752 833 H776 V851 H752Z M757 837 V847 H771 V837Z" fill="#6a6a6a" fill-rule="evenodd"/><path d="M779 848 Q805 843 822 853 Q805 859 779 857Z" fill="#3a3a3a"/><path d="M832 856 L853 840 L900 850 L880 870 L840 870Z" fill="#d8d8d8"/><path d="M836 860 L870 852 V918 L836 915Z" fill="#555"/><path d="M1016 815 L1000 830 L960 845 L1009 835 L1016 830Z" fill="#d0d0d0"/><ellipse cx="851" cy="893" rx="11" ry="12" fill="#f0f0f0"/><path d="M845 885 Q850 893 846 903 Q840 895 845 885Z" fill="#999"/><path d="M815 873 L760 910 L770 912 L823 880Z" fill="#4a4aa0" opacity=".6"/><path d="M692.7 757 Q695 745 737.7 724.6 Q750 720 776.9 729.2 L830 704 Q882 692 945 708 Q1000 725 1009 752 L1009 805 Q1000 830 940 843 Q880 850 830 838 L812 825 L781.5 800.7 L742.3 816.9 L710 816.9 L692.7 812.3 Z" fill="url(#v3os)"/><path d="M815 752 Q818 712 882 700 Q990 700 1009 752 Q1000 790 930 795 Q850 792 815 752Z" fill="#cf8d00"/><path d="M815 752 Q880 735 990 718 Q1000 730 1009 752 Q1000 790 930 795 Q850 792 815 752Z" fill="#c88800"/><path d="M692.7 757 Q695 745 737.7 724.6 Q750 720 776.9 729.2 L716.9 767.3 Q700 765 692.7 757Z" fill="#c48800"/><path d="M776.9 729.2 L830 704 L822 735 L815 752 L786 747.7Z" fill="#b07800"/><path d="M786 747.7 L815 752 L812 814.6 L786 812Z" fill="#3a2800"/><ellipse cx="795.3" cy="775.4" rx="8.5" ry="11.5" fill="#e09a00"/><path d="M789 768 Q796 770 800 784 Q790 782 789 768Z" fill="#f0b030"/><path d="M887 750 Q905 738 930 743 L935 760 L895 762Z" fill="#6a4800"/><path d="M912 775 Q935 760 965 770 L980 778 L935 790 Q915 792 912 775Z" fill="#7a5300"/><path d="M852 590 L866 665 H838Z" fill="#0a5a0a" opacity=".85"/><rect x="847" y="665" width="11" height="65" fill="#0a5a0a" opacity=".8"/><rect x="849" y="700" width="8" height="32" fill="#6aa040" opacity=".8"/><path d="M660.2 717.3 L937.1 797.2 L1047 725.3 M937.1 797.2 V978.9" stroke="#e0e000" stroke-width="1.3" fill="none"/></g>
<rect x="1190" y="177" width="2" height="819" fill="#fff"/><rect x="520" y="585" width="1342" height="2" fill="#fff"/>
<rect x="519" y="177" width="1" height="820" fill="#fff"/><rect x="1862" y="177" width="1" height="820" fill="#fff"/><rect x="520" y="995.6" width="1343" height="1" fill="#fff"/><rect x="519" y="997" width="1344" height="1" fill="#111"/>
</svg><!--/VP-->

</body></html>
